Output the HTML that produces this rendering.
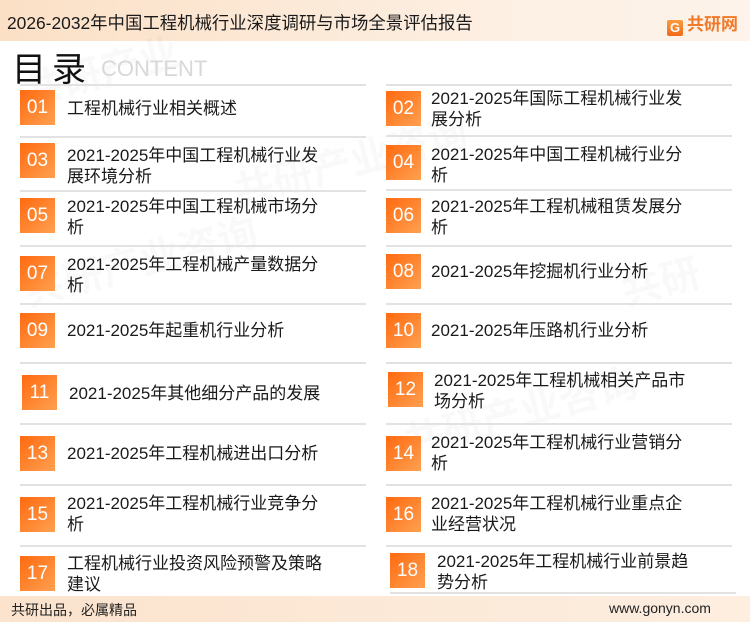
<!DOCTYPE html>
<html><head><meta charset="utf-8"><style>
*{margin:0;padding:0;box-sizing:border-box}
body{width:750px;height:622px;overflow:hidden;background:#fff;font-family:"Liberation Sans","Noto Sans CJK SC",sans-serif;position:relative;color:#222}
.hdr{position:absolute;left:0;top:0;width:750px;height:41px;background:linear-gradient(90deg,#fbe0c6,#fdf0e4 70%,#fdf3ea)}
.hdr .t{position:absolute;left:7px;top:10px;font-size:17.4px;color:#1a1a1a;white-space:nowrap}
.logo{position:absolute;left:667px;top:10px;font-size:17px;font-weight:bold;color:#f07a2a}
.logo i{display:inline-block;width:16px;height:16px;background:linear-gradient(#ff9a3c,#f06a1a);border-radius:2px;vertical-align:-2px;margin-right:4px;color:#fff;font-style:normal;font-size:13px;text-align:center;line-height:16px}
.ml{position:absolute;left:12px;top:42px;font-size:34px;color:#111;letter-spacing:6px}
.ct{position:absolute;left:101px;top:56px;font-size:22px;color:#d8d8d8}
.b{position:absolute;width:35px;height:35px;background:linear-gradient(135deg,#ff6a10,#ffa050);color:#fff;font-size:19px;text-align:center;line-height:35px}
.x{position:absolute;font-size:17px;line-height:21px;color:#1a1a1a;width:268px}
.l{position:absolute;height:2px;background:#e2e2e2}
.ftr{position:absolute;left:0;top:596px;width:750px;height:26px;background:linear-gradient(90deg,#fbe3cd,#fdeee0)}
.ftr .a{position:absolute;left:11px;top:4px;font-size:14px}
.ftr .c{position:absolute;left:609px;top:4px;font-size:14px}
.wm{position:absolute;font-size:40px;font-weight:bold;color:rgba(0,0,0,0.025);transform:rotate(-15deg)}
</style></head><body>
<div class="hdr"><div class="t">2026-2032年中国工程机械行业深度调研与市场全景评估报告</div><div class="logo"><i>G</i>共研网</div></div>
<div class="wm" style="left:20px;top:40px">共研产业</div>
<div class="wm" style="left:230px;top:130px">共研产业咨询</div>
<div class="wm" style="left:20px;top:230px">共研产业咨询</div>
<div class="wm" style="left:400px;top:380px">共研产业咨询</div>
<div class="wm" style="left:620px;top:250px">共研</div>
<div class="ml">目录</div><div class="ct">CONTENT</div>

<div class="l" style="left:20px;top:84px;width:346px"></div>
<div class="l" style="left:386px;top:84px;width:346px"></div>

<div class="b" style="left:20px;top:90px">01</div><div class="x" style="left:67px;top:98px">工程机械行业相关概述</div>
<div class="b" style="left:386px;top:91px">02</div><div class="x" style="left:431px;top:88px">2021-2025年国际工程机械行业发展分析</div>
<div class="l" style="left:20px;top:136px;width:346px"></div><div class="l" style="left:386px;top:135px;width:346px"></div>

<div class="b" style="left:20px;top:143px">03</div><div class="x" style="left:67px;top:145px">2021-2025年中国工程机械行业发展环境分析</div>
<div class="b" style="left:386px;top:145px">04</div><div class="x" style="left:431px;top:144px">2021-2025年中国工程机械行业分析</div>
<div class="l" style="left:20px;top:190px;width:346px"></div><div class="l" style="left:386px;top:189px;width:346px"></div>

<div class="b" style="left:20px;top:198px">05</div><div class="x" style="left:67px;top:196px">2021-2025年中国工程机械市场分析</div>
<div class="b" style="left:386px;top:198px">06</div><div class="x" style="left:431px;top:196px">2021-2025年工程机械租赁发展分析</div>
<div class="l" style="left:20px;top:245px;width:346px"></div><div class="l" style="left:386px;top:245px;width:346px"></div>

<div class="b" style="left:20px;top:256px">07</div><div class="x" style="left:67px;top:254px">2021-2025年工程机械产量数据分析</div>
<div class="b" style="left:386px;top:254px">08</div><div class="x" style="left:431px;top:261px">2021-2025年挖掘机行业分析</div>
<div class="l" style="left:20px;top:303px;width:346px"></div><div class="l" style="left:386px;top:303px;width:346px"></div>

<div class="b" style="left:20px;top:313px">09</div><div class="x" style="left:67px;top:320px">2021-2025年起重机行业分析</div>
<div class="b" style="left:386px;top:313px">10</div><div class="x" style="left:431px;top:320px">2021-2025年压路机行业分析</div>
<div class="l" style="left:20px;top:362px;width:346px"></div><div class="l" style="left:386px;top:362px;width:346px"></div>

<div class="b" style="left:22px;top:375px">11</div><div class="x" style="left:69px;top:383px">2021-2025年其他细分产品的发展</div>
<div class="b" style="left:388px;top:372px">12</div><div class="x" style="left:434px;top:370px">2021-2025年工程机械相关产品市场分析</div>
<div class="l" style="left:20px;top:423px;width:346px"></div><div class="l" style="left:386px;top:423px;width:346px"></div>

<div class="b" style="left:20px;top:436px">13</div><div class="x" style="left:67px;top:443px">2021-2025年工程机械进出口分析</div>
<div class="b" style="left:386px;top:436px">14</div><div class="x" style="left:431px;top:432px">2021-2025年工程机械行业营销分析</div>
<div class="l" style="left:20px;top:484px;width:346px"></div><div class="l" style="left:386px;top:484px;width:346px"></div>

<div class="b" style="left:20px;top:497px">15</div><div class="x" style="left:67px;top:493px">2021-2025年工程机械行业竞争分析</div>
<div class="b" style="left:386px;top:497px">16</div><div class="x" style="left:431px;top:493px">2021-2025年工程机械行业重点企业经营状况</div>
<div class="l" style="left:20px;top:545px;width:346px"></div><div class="l" style="left:386px;top:545px;width:346px"></div>

<div class="b" style="left:20px;top:556px">17</div><div class="x" style="left:67px;top:553px">工程机械行业投资风险预警及策略建议</div>
<div class="b" style="left:390px;top:553px">18</div><div class="x" style="left:437px;top:551px">2021-2025年工程机械行业前景趋势分析</div>
<div class="l" style="left:390px;top:592px;width:346px"></div>

<div class="ftr"><div class="a">共研出品，必属精品</div><div class="c">www.gonyn.com</div></div>
</body></html>
